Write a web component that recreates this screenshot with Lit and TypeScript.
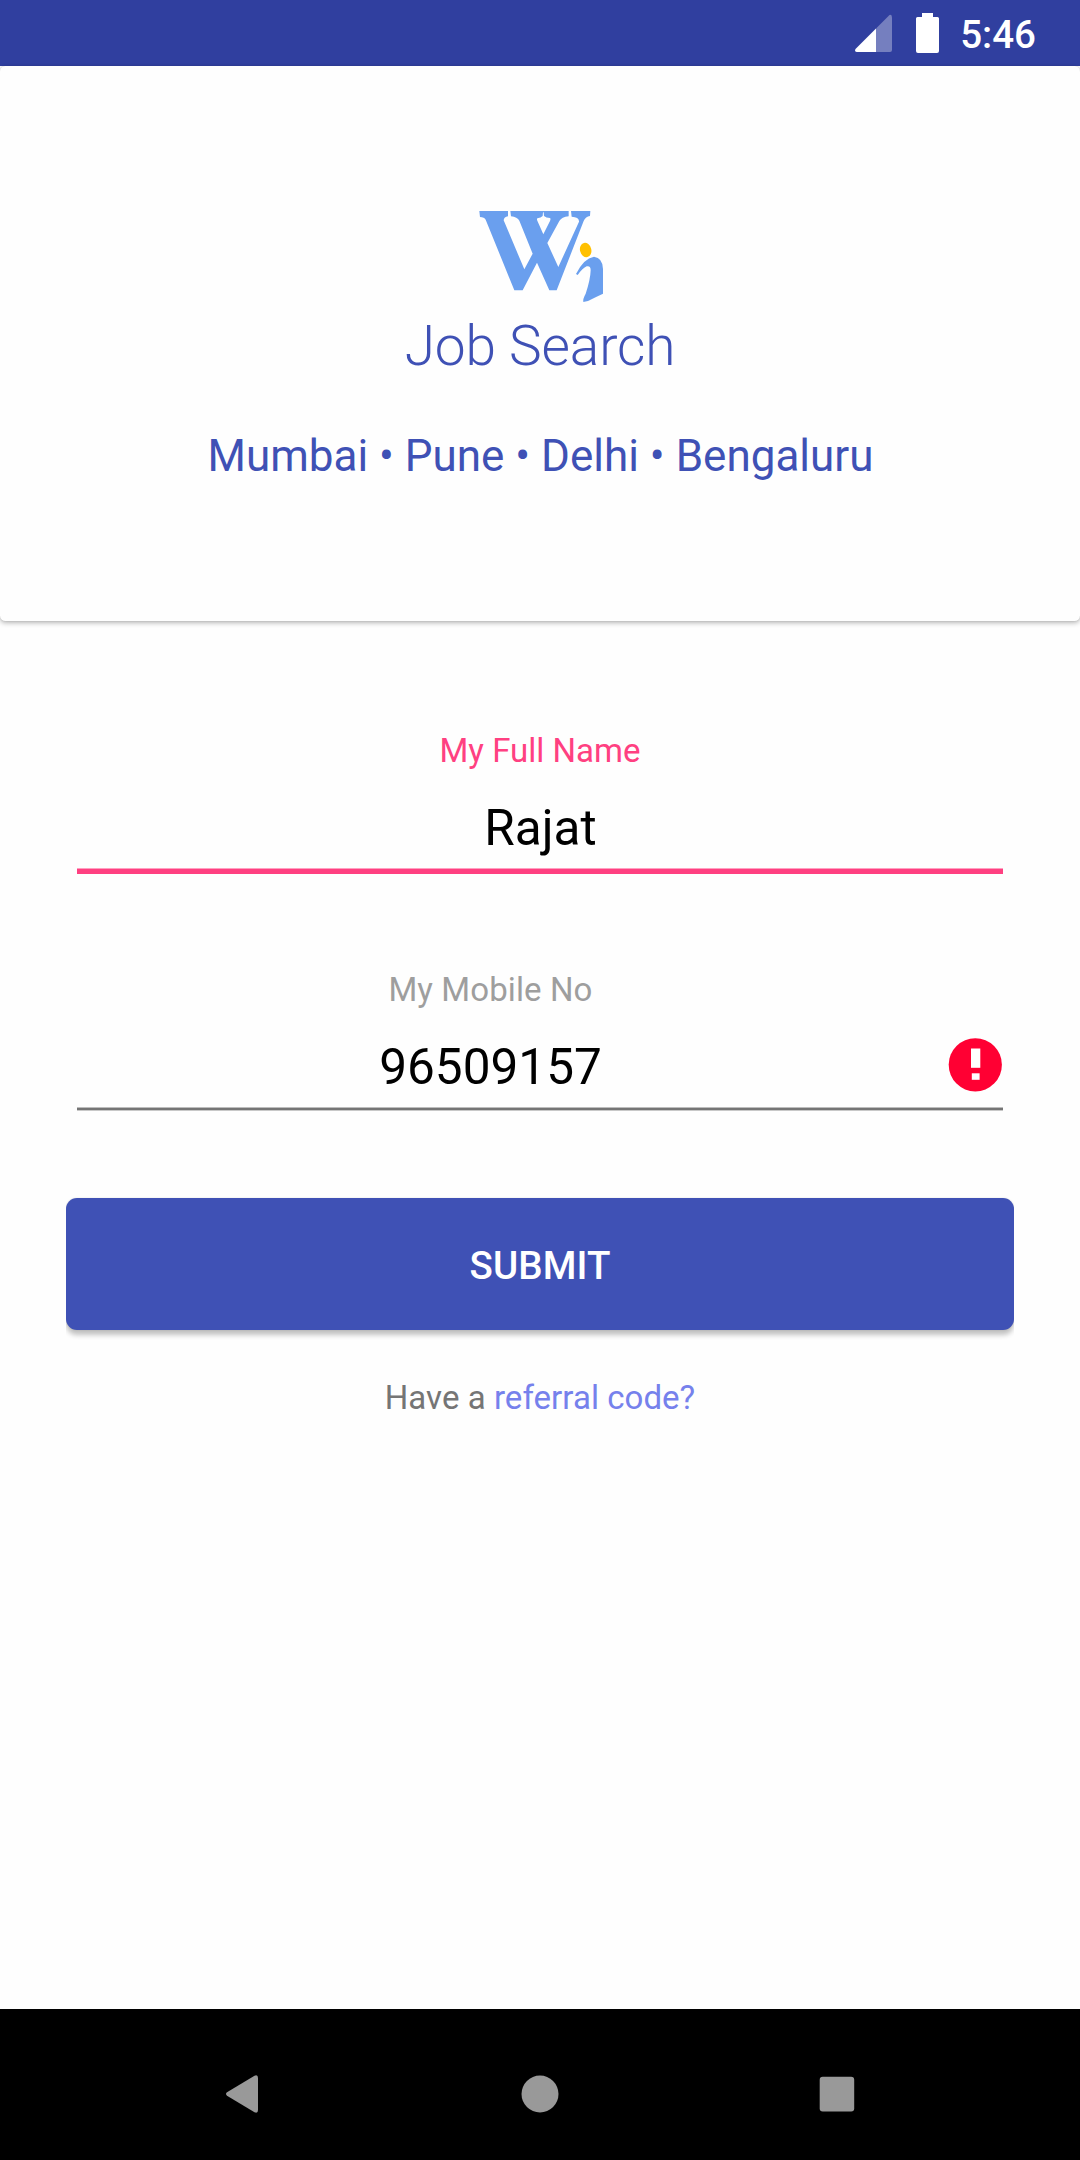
import { LitElement, html, css, svg } from "lit";
import { customElement, property } from "lit/decorators.js";

const errorIcon = svg`
  <svg class="error" viewBox="0 0 54 54" width="54" height="54">
    <circle cx="27.3" cy="26.8" r="26.6" fill="#ff0033" />
    <rect x="23" y="10.5" width="9.3" height="19.3" fill="#fff" />
    <rect x="23.8" y="35.3" width="7.8" height="6.5" fill="#fff" />
  </svg>`;

@customElement("status-bar")
export class StatusBar extends LitElement {
  @property() time = "";

  static styles = css`
    :host {
      display: flex;
      align-items: flex-start;
      justify-content: flex-end;
      box-sizing: border-box;
      height: 66px;
      padding-right: 44px;
      background: #303f9f;
    }
    .icons {
      display: block;
    }
    .time {
      color: #fff;
      font-size: 38.5px;
      font-weight: 500;
      line-height: 69px;
      margin-left: 19px;
    }
  `;

  render() {
    return html`
      <svg class="icons" width="88" height="66" viewBox="853 0 88 66">
        <path d="M889.5 15Q892 14 892 17.5V50Q892 52 890 52H876V28.5Z" fill="#757fbf" />
        <path d="M876 28.5V52H857Q854 51.5 855.5 49Z" fill="#fff" />
        <path
          d="M922 13H933V17H937.5Q939 17 939 18.5V51Q939 53 937 53H918Q916 53 916 51V18.5Q916 17 917.5 17H922Z"
          fill="#fff"
        />
      </svg>
      <span class="time">${this.time}</span>
    `;
  }
}

@customElement("brand-card")
export class BrandCard extends LitElement {
  @property({ attribute: false }) cities: string[] = [];

  static styles = css`
    :host {
      display: flex;
      flex-direction: column;
      align-items: center;
      box-sizing: border-box;
      height: 555px;
      padding-top: 143px;
      background: #fefefe;
      border-radius: 5.5px;
      box-shadow: 0 2px 5px rgba(0, 0, 0, 0.28), 0 0 2px rgba(0, 0, 0, 0.12);
      color: #3f51b5;
    }
    .logo {
      display: block;
      margin-left: 2px;
    }
    .title {
      margin-top: 9px;
      font-size: 55px;
      font-weight: 300;
      letter-spacing: -0.15px;
      line-height: 64px;
    }
    .cities {
      margin-top: 52px;
      padding-left: 1px;
      font-size: 44px;
      line-height: 52px;
    }
  `;

  render() {
    return html`
      <svg class="logo" width="130" height="96" viewBox="48 42 390 288">
        <path
          fill="#6a9fee"
          fill-rule="evenodd"
          d="M58 48H144V64Q132 66 131 76L193 223L218 176L178 77Q172 66 153 64L151 48H326V64Q305 66 298 78L262 144L295 216L357 80Q358 66 335 65L333 48H391L390 63Q377 64 371 78L290 286H268L231 203L188 286H163L77 74Q73 66 60 66ZM232 70Q243 69 248 63L249 52H251L252 63Q258 69 270 69Q273 71 270 78L250 118L232 77Q230 73 232 70Z"
        />
        <path
          fill="#6a9fee"
          d="M348 237Q371 190 402 185Q428 188 429 222V296Q405 307 384 318L370 321Q368 312 377 296Q391 255 392 226Q392 211 380 214Q368 219 353 240Z"
        />
        <ellipse cx="377" cy="165" rx="17" ry="22" transform="rotate(-14 377 165)" fill="#ffc000" />
      </svg>
      <div class="title">Job Search</div>
      <div class="cities">${this.cities.join(" • ")}</div>
    `;
  }
}

@customElement("form-field")
export class FormField extends LitElement {
  @property() label = "";
  @property() value = "";
  @property({ type: Boolean, reflect: true }) focused = false;
  @property({ type: Boolean, reflect: true }) invalid = false;

  static styles = css`
    :host {
      display: block;
      height: 144px;
      text-align: center;
    }
    .label {
      color: #9e9e9e;
      font-size: 33px;
      line-height: 40px;
    }
    .row {
      display: flex;
      align-items: center;
      height: 58px;
      margin-top: 28px;
    }
    .value {
      flex: 1;
      color: #000;
      font-size: 49.5px;
      line-height: 58px;
    }
    .line {
      margin-top: 11px;
      height: 2px;
      background: #757575;
      border-top: 1px solid #bdbdbd;
      border-bottom: 1px solid #c8c8c8;
    }
    :host([focused]) .label {
      color: #ff4081;
    }
    :host([focused]) .value {
      padding-left: 1px;
    }
    :host([focused]) .line {
      height: 5px;
      background: #ff4081;
      border-top-color: #ff9fc0;
      border-bottom: 0;
    }
    :host([invalid]) .label {
      padding-right: 99px;
      letter-spacing: 0.1px;
    }
    .error {
      flex: none;
      margin: -5px 1px 0 44px;
    }
  `;

  render() {
    return html`
      <div class="label">${this.label}</div>
      <div class="row">
        <div class="value">${this.value}</div>
        ${this.invalid ? errorIcon : null}
      </div>
      <div class="line"></div>
    `;
  }
}

@customElement("nav-bar")
export class NavBar extends LitElement {
  static styles = css`
    :host {
      display: flex;
      align-items: center;
      justify-content: space-between;
      box-sizing: border-box;
      height: 151px;
      padding: 19px 222px 0;
      background: #000;
    }
    svg {
      display: block;
      fill: #999;
    }
  `;

  render() {
    return html`
      <svg width="42" height="40" viewBox="0 0 42 40">
        <path d="M5 18.3L32.5 1.7Q36 .2 36 4V36Q36 39.8 32.5 38.3L5 21.7Q3 20 5 18.3Z" />
      </svg>
      <svg width="40" height="40" viewBox="0 0 40 40"><circle cx="20" cy="20" r="18.5" /></svg>
      <svg width="42" height="40" viewBox="0 0 42 40">
        <rect x="3.7" y="2.7" width="34.5" height="34.7" rx="3" />
      </svg>
    `;
  }
}

@customElement("app-root")
export class AppRoot extends LitElement {
  static styles = css`
    :host {
      display: flex;
      flex-direction: column;
      width: 1080px;
      height: 2160px;
      overflow: hidden;
      background: #fefefe;
      font-family: Roboto, "Liberation Sans", sans-serif;
    }
    .form {
      flex: 1;
      display: flex;
      flex-direction: column;
      padding: 110px 66px 0;
    }
    form-field {
      margin: 0 11px 95px;
    }
    .clip {
      overflow: hidden;
      margin-top: -15px;
      padding: 4px 0 14px;
    }
    .submit {
      display: block;
      width: 100%;
      height: 132px;
      padding: 3px 0 0;
      border: 0;
      border-radius: 11px;
      background: #3f51b5;
      box-shadow: 0 5px 5px rgba(0, 0, 0, 0.24), 0 0 2px rgba(0, 0, 0, 0.12);
      color: #fff;
      font-family: inherit;
      font-size: 38.5px;
      font-weight: 500;
      letter-spacing: 0.1px;
    }
    .referral {
      margin-top: 34px;
      color: #757575;
      font-size: 33px;
      letter-spacing: 0.05px;
      line-height: 40px;
      text-align: center;
    }
    .link {
      color: #7681ec;
    }
  `;

  render() {
    return html`
      <status-bar time="5:46"></status-bar>
      <brand-card .cities=${["Mumbai", "Pune", "Delhi", "Bengaluru"]}></brand-card>
      <div class="form">
        <form-field label="My Full Name" value="Rajat" focused></form-field>
        <form-field label="My Mobile No" value="96509157" invalid></form-field>
        <div class="clip"><button class="submit">SUBMIT</button></div>
        <div class="referral">Have a <span class="link">referral code?</span></div>
      </div>
      <nav-bar></nav-bar>
    `;
  }
}
